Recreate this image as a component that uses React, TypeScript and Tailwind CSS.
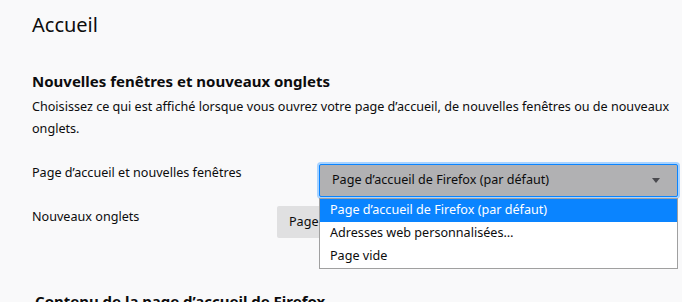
const font = { fontFamily: '"Noto Sans", "Open Sans", sans-serif' };

const options = [
  "Page d’accueil de Firefox (par défaut)",
  "Adresses web personnalisées…",
  "Page vide",
];

function Caret() {
  return (
    <svg width="8" height="5" viewBox="0 0 8 5" className="shrink-0">
      <path d="M0 0h8L4 5z" fill="#4a4a4f" />
    </svg>
  );
}

export default function App() {
  return (
    <div
      className="h-[302px] w-[682px] overflow-hidden bg-[#f9f9fa] pl-8 pr-[2px] text-[12.6px] text-[#0c0c0d]"
      style={font}
    >
      <h1 className="pt-[10px] text-[20px] leading-[30px]">Accueil</h1>

      <h2 className="mt-[31px] text-[15px] leading-[20px] font-bold">
        Nouvelles fenêtres et nouveaux onglets
      </h2>
      <p className="mt-[5px] pr-[8px] leading-[22px]">
        Choisissez ce qui est affiché lorsque vous ouvrez votre page d’accueil, de nouvelles
        fenêtres ou de nouveaux onglets.
      </p>

      <div className="mt-[22px] flex items-start justify-between">
        <span className="pt-[2px] leading-[18px]">Page d’accueil et nouvelles fenêtres</span>
        <div className="relative">
          <div className="rounded-[4px] bg-[#a8d3ff] p-[2px]">
            <div className="flex h-[33px] w-[359px] items-center justify-between rounded-[2px] border border-[#0a84ff] bg-[#b1b1b3] pl-3 pr-[17px]">
              <span>Page d’accueil de Firefox (par défaut)</span>
              <Caret />
            </div>
          </div>
          <ul className="absolute top-[36px] left-[2px] z-10 w-[359px] border border-[#a0a0a0] bg-white">
            {options.map((o, i) => (
              <li
                key={o}
                className={`flex h-[23px] items-center pl-[10px] ${
                  i === 0 ? "bg-[#0a84ff] text-white" : ""
                }`}
              >
                {o}
              </li>
            ))}
          </ul>
        </div>
      </div>

      <div className="mt-[7px] flex items-start justify-between pr-[3px]">
        <span className="pt-[2px] leading-[18px]">Nouveaux onglets</span>
        <div className="flex h-[32px] w-[400px] items-center rounded-[2px] bg-[#e0e0e1] pl-3">
          Page d’accueil de Firefox (par défaut)
        </div>
      </div>

      <h2 className="mt-[53px] pl-[3px] text-[15px] leading-[20px] font-bold">
        Contenu de la page d’accueil de Firefox
      </h2>
    </div>
  );
}
